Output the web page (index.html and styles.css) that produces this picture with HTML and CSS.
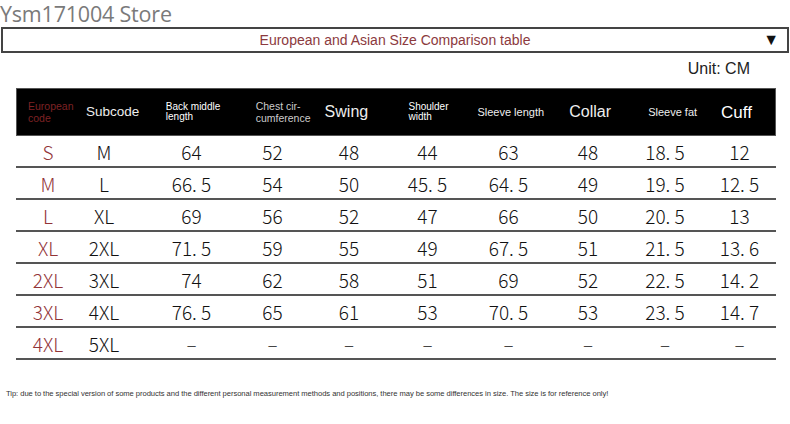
FILE: index.html
```html
<!DOCTYPE html>
<html>
<head>
<meta charset="utf-8">
<link rel="stylesheet" href="styles.css">
</head>
<body>
<div class="page">
  <div class="store">Ysm171004 Store</div>
  <div class="select">
    <span class="select-text">European and Asian Size Comparison table</span>
    <span class="arrow">▼</span>
  </div>
  <div class="unit">Unit: CM</div>
  <div class="table">
    <div class="head">
      <div class="h h1 red">European<br>code</div>
      <div class="h h2 mid">Subcode</div>
      <div class="h h3 small bright">Back middle<br>length</div>
      <div class="h h4 grey">Chest cir-<br>cumference</div>
      <div class="h h5 big">Swing</div>
      <div class="h h6 small">Shoulder<br>width</div>
      <div class="h h7 med">Sleeve length</div>
      <div class="h h8 big">Collar</div>
      <div class="h h9 med">Sleeve fat</div>
      <div class="h h10 big2">Cuff</div>
    </div>
    <div class="row"><div class="c eu">S</div><div class="c sub">M</div><div class="c">64</div><div class="c">52</div><div class="c">48</div><div class="c">44</div><div class="c">63</div><div class="c">48</div><div class="c">18. 5</div><div class="c">12</div></div>
    <div class="row"><div class="c eu">M</div><div class="c sub">L</div><div class="c">66. 5</div><div class="c">54</div><div class="c">50</div><div class="c">45. 5</div><div class="c">64. 5</div><div class="c">49</div><div class="c">19. 5</div><div class="c">12. 5</div></div>
    <div class="row"><div class="c eu">L</div><div class="c sub">XL</div><div class="c">69</div><div class="c">56</div><div class="c">52</div><div class="c">47</div><div class="c">66</div><div class="c">50</div><div class="c">20. 5</div><div class="c">13</div></div>
    <div class="row"><div class="c eu">XL</div><div class="c sub">2XL</div><div class="c">71. 5</div><div class="c">59</div><div class="c">55</div><div class="c">49</div><div class="c">67. 5</div><div class="c">51</div><div class="c">21. 5</div><div class="c">13. 6</div></div>
    <div class="row"><div class="c eu">2XL</div><div class="c sub">3XL</div><div class="c">74</div><div class="c">62</div><div class="c">58</div><div class="c">51</div><div class="c">69</div><div class="c">52</div><div class="c">22. 5</div><div class="c">14. 2</div></div>
    <div class="row"><div class="c eu">3XL</div><div class="c sub">4XL</div><div class="c">76. 5</div><div class="c">65</div><div class="c">61</div><div class="c">53</div><div class="c">70. 5</div><div class="c">53</div><div class="c">23. 5</div><div class="c">14. 7</div></div>
    <div class="row"><div class="c eu">4XL</div><div class="c sub">5XL</div><div class="c">–</div><div class="c">–</div><div class="c">–</div><div class="c">–</div><div class="c">–</div><div class="c">–</div><div class="c">–</div><div class="c">–</div></div>
  </div>
  <div class="tip">Tip: due to the special version of some products and the different personal measurement methods and positions, there may be some differences in size. The size is for reference only!</div>
</div>
</body>
</html>
```
FILE: styles.css
```css
html, body {
  margin: 0;
  padding: 0;
  background: #fff;
}
.page {
  width: 790px;
  height: 424px;
  position: relative;
  overflow: hidden;
  font-family: "Liberation Sans", Arial, sans-serif;
}
.store {
  font-family: "Open Sans", "Noto Sans", sans-serif;
  font-size: 21.5px;
  line-height: 27px;
  height: 27px;
  color: #7a7a7a;
  letter-spacing: -0.2px;
}
.select {
  margin-left: 1px;
  width: 784px;
  height: 22px;
  border: 2px solid #444;
  display: flex;
  align-items: center;
  justify-content: center;
  position: relative;
}
.select-text {
  color: #8c3a3e;
  font-size: 14px;
}
.arrow {
  position: absolute;
  right: 8px;
  top: 2px;
  font-size: 16px;
  line-height: 18px;
  color: #111;
}
.unit {
  text-align: right;
  padding-right: 40px;
  margin-top: 7px;
  font-size: 16px;
  line-height: 18px;
  color: #222;
  height: 22px;
}
.table {
  margin-left: 16px;
  width: 760px;
  margin-top: 6px;
}
.head {
  height: 48px;
  background: #000;
  border: 1px solid #555;
  box-sizing: border-box;
  display: flex;
  align-items: center;
  color: #fff;
}
.h { box-sizing: border-box; line-height: 1; }
.h1 { width: 69px; padding-left: 11px; }
.h2 { width: 80px; }
.h3 { width: 90px; }
.h4 { width: 69px; }
.h5 { width: 84px; }
.h6 { width: 69px; }
.h7 { width: 92px; }
.h8 { width: 79px; }
.h9 { width: 73px; }
.h10 { width: 54px; }
.small { font-size: 10px; line-height: 10px; }
.mid { font-size: 13.5px; color: #eee; }
.med { font-size: 11px; color: #eee; }
.big { font-size: 16px; color: #eee; }
.big2 { font-size: 17px; }
.red { color: #7e2224; font-size: 10.5px; line-height: 12px; }
.grey { color: #ccc; font-size: 10.5px; line-height: 12px; }
.bright { color: #fff; }
.row {
  display: grid;
  grid-template-columns: 60px 73px 85px 77px 76px 81px 81px 78px 76px 73px;
  height: 30px;
  border-bottom: 2px solid #555;
  align-items: center;
  font-family: "Noto Sans CJK SC", "Liberation Sans", sans-serif;
  font-size: 19px;
  font-weight: 300;
  color: #111;
}
.c {
  text-align: center;
  padding-top: 2px;
  line-height: 24px;
}
.eu {
  color: #923437;
  padding-left: 4px;
}
.sub {
  padding-right: 17px;
}
.tip {
  margin-top: 29px;
  padding-left: 6px;
  font-size: 7.6px;
  color: #333;
  letter-spacing: -0.05px;
}
```
